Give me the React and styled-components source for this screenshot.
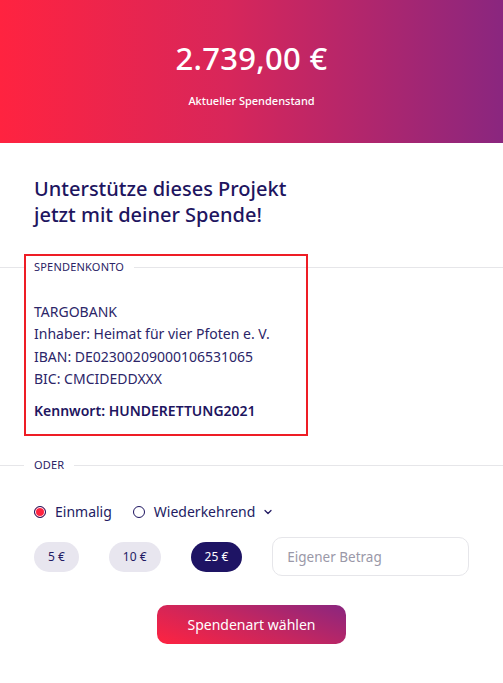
import styled, { createGlobalStyle } from "styled-components";
import { FiChevronDown } from "react-icons/fi";

const GlobalStyle = createGlobalStyle`
    html, body {
        margin: 0;
        padding: 0;
        background: #ffffff;
        font-family: "Noto Sans", "Open Sans", sans-serif;
        color: #231b63;
    }
    * {
        box-sizing: border-box;
    }
`;

const amounts = [
    { label: "5 €", active: false },
    { label: "10 €", active: false },
    { label: "25 €", active: true },
];

export default function App() {
    return (
        <>
            <GlobalStyle />
            <Page>
                <Header>
                    <Total>2.739,00 €</Total>
                    <TotalLabel>Aktueller Spendenstand</TotalLabel>
                </Header>

                <Body>
                    <Title>
                        Unterstütze dieses Projekt
                        <br />
                        jetzt mit deiner Spende!
                    </Title>

                    <Divider>
                        <span>Spendenkonto</span>
                    </Divider>
                    <BankInfo>
                        <p>TARGOBANK</p>
                        <p>Inhaber: Heimat für vier Pfoten e. V.</p>
                        <p>IBAN: DE02300209000106531065</p>
                        <p>BIC: CMCIDEDDXXX</p>
                        <Password>Kennwort: HUNDERETTUNG2021</Password>
                    </BankInfo>

                    <Divider $gap>
                        <span>Oder</span>
                    </Divider>

                    <RadioRow>
                        <RadioOption>
                            <Radio $checked />
                            Einmalig
                        </RadioOption>
                        <RadioOption>
                            <Radio />
                            Wiederkehrend
                            <FiChevronDown className="chevron" />
                        </RadioOption>
                    </RadioRow>

                    <AmountRow>
                        {amounts.map((a) => (
                            <AmountPill key={a.label} $active={a.active}>
                                {a.label}
                            </AmountPill>
                        ))}
                        <AmountInput type="text" placeholder="Eigener Betrag" />
                    </AmountRow>

                    <SubmitWrap>
                        <SubmitButton>Spendenart wählen</SubmitButton>
                    </SubmitWrap>
                </Body>

                <Highlight />
            </Page>
        </>
    );
}

const Page = styled.div`
    position: relative;
    width: 503px;
    min-height: 683px;
`;

const Header = styled.header`
    height: 143px;
    display: flex;
    flex-direction: column;
    align-items: center;
    justify-content: center;
    background: linear-gradient(90deg, #ff2340 0%, #d8265a 45%, #8a267f 100%);
    color: #ffffff;
`;

const Total = styled.div`
    font-size: 31px;
    font-weight: 500;
    line-height: 36px;
    margin-top: 4px;
    letter-spacing: 0.3px;
`;

const TotalLabel = styled.div`
    font-size: 11px;
    font-weight: 500;
    margin-top: 17px;
`;

const Body = styled.main`
    padding: 33px 0 0;
`;

const Title = styled.h1`
    margin: 0 34px;
    font-size: 20px;
    font-weight: 500;
    line-height: 26px;
    color: #1e1560;
`;

const Divider = styled.div`
    display: flex;
    align-items: center;
    margin-top: ${(p) => (p.$gap ? "36px" : "32px")};
    font-size: 11px;
    text-transform: uppercase;
    letter-spacing: 0.2px;
    color: #2a2366;

    &::before,
    &::after {
        content: "";
        height: 1px;
        background: #e6e6e9;
    }
    &::before {
        width: 24px;
    }
    &::after {
        flex: 1;
    }
    span {
        padding: 0 10px;
        line-height: 14px;
    }
`;

const BankInfo = styled.div`
    margin: 27px 34px 0;
    font-size: 14px;
    line-height: 22.3px;
    color: #2b2568;

    p {
        margin: 0;
    }
`;

const Password = styled.p`
    && {
        margin-top: 10px;
    }
    font-weight: 600;
    color: #1e1560;
`;

const RadioRow = styled.div`
    display: flex;
    gap: 21px;
    margin: 29px 34px 0;
    font-size: 14px;
    color: #231b63;
`;

const RadioOption = styled.label`
    display: flex;
    align-items: center;
    gap: 9px;
    line-height: 22px;

    .chevron {
        width: 12px;
        height: 12px;
        margin-left: -2px;
        stroke-width: 2.5;
    }
`;

const Radio = styled.span`
    width: 12px;
    height: 12px;
    border-radius: 50%;
    border: 1px solid #1e1560;
    background: ${(p) => (p.$checked ? "#ff2340" : "#ffffff")};
    box-shadow: ${(p) => (p.$checked ? "inset 0 0 0 1px #ffffff" : "none")};
`;

const AmountRow = styled.div`
    display: flex;
    align-items: center;
    gap: 30px;
    margin: 14px 34px 0;
`;

const AmountPill = styled.button`
    flex: none;
    height: 30px;
    padding: 0 14px;
    border: none;
    border-radius: 15px;
    white-space: nowrap;
    font-family: inherit;
    font-size: 12px;
    background: ${(p) => (p.$active ? "#1e1464" : "#e8e6ef")};
    color: ${(p) => (p.$active ? "#ffffff" : "#231b63")};
`;

const AmountInput = styled.input`
    flex: none;
    width: 197px;
    height: 39px;
    padding: 0 14px;
    border: 1px solid #e6e6ea;
    border-radius: 10px;
    font-family: inherit;
    font-size: 13.5px;
    color: #231b63;
    outline: none;

    &::placeholder {
        color: #9a98a8;
    }
`;

const SubmitWrap = styled.div`
    display: flex;
    justify-content: center;
    margin-top: 29px;
`;

const SubmitButton = styled.button`
    width: 189px;
    height: 39px;
    border: none;
    border-radius: 10px;
    font-family: inherit;
    font-size: 14px;
    color: #ffffff;
    background: linear-gradient(20deg, #ff2340 0%, #c6265f 50%, #8a267f 100%);
`;

const Highlight = styled.div`
    position: absolute;
    left: 24px;
    top: 254px;
    width: 284px;
    height: 182px;
    border: 2px solid #ee1d25;
    pointer-events: none;
`;
